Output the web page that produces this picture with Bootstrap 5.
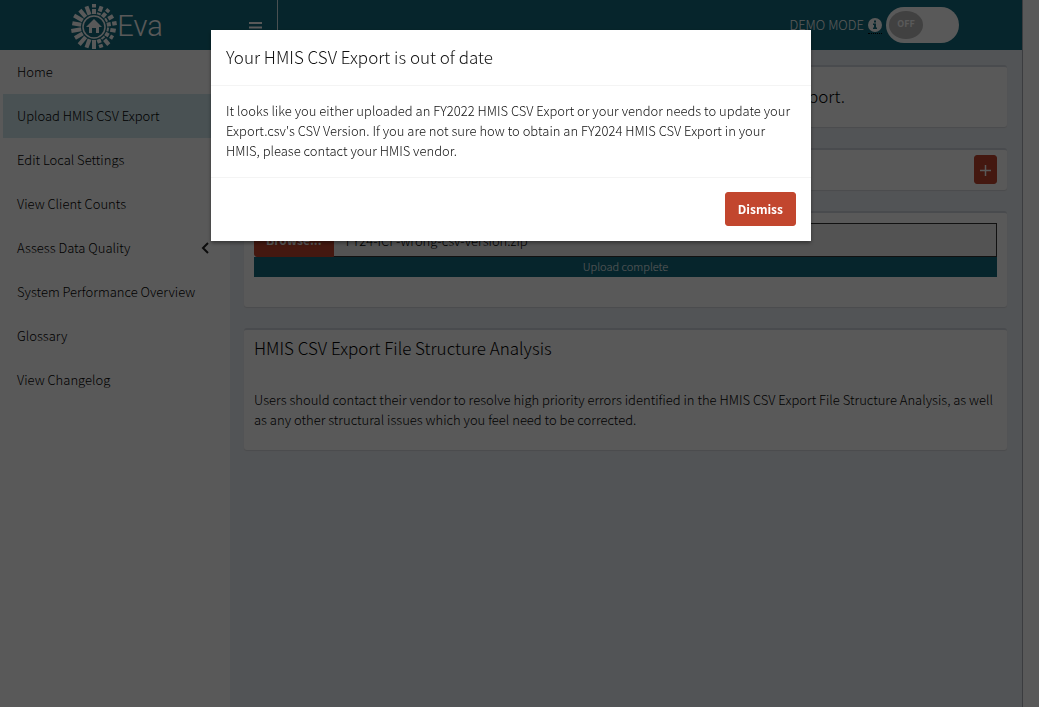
<!DOCTYPE html>
<html lang="en">
<head>
<meta charset="utf-8">
<meta name="viewport" content="width=device-width, initial-scale=1">
<title>Eva</title>
<link href="https://cdn.jsdelivr.net/npm/bootstrap@5.3.0/dist/css/bootstrap.min.css" rel="stylesheet">
<style>
:root { --teal: #126b7e; --brick: #c2462e; }
body { font: 300 13px/20px "Noto Sans CJK SC", "Open Sans", sans-serif; color: #111; background: #fff; }
h1, h2 { font-size: 17px; line-height: 20px; font-weight: 300; }
.page { isolation: isolate; margin-right: 16px; border-right: 1px solid #a8adb5; background: #ecf0f5; }
.topbar { height: 50px; background: var(--teal); color: #fff; }
.brand { width: 230px; padding: 3px 0 0 4px; color: #fff; font: 300 29px/47px Roboto, sans-serif; }
.menu-toggle { width: 48px; border-right: 1px solid #d5e4e8 !important; }
.side { width: 230px; background: #fff; }
.side a { height: 44px; padding: 0 21px 0 14px; border-left: 3px solid #fff; color: #000; }
.side a.active { background: #d0e8ee; }
main { padding: 15px 15px 0 14px; }
.panel { border-top: 2px solid #d2d6de; border-radius: 3px; background: #fff; box-shadow: 0 1px 1px rgba(0,0,0,.1); margin-bottom: 21px; padding: 10px; color: #000; }
.panel p { margin-bottom: 10px; }
.panel-lead { margin: 9px 0 11px; }
.panel-upload { padding-bottom: 30px; }
.panel-analysis { padding-top: 8px; }
.btn-brick { --bs-btn-font-size: 12px; --bs-btn-line-height: 20px; --bs-btn-font-weight: 700; --bs-btn-color: #fff; --bs-btn-bg: var(--brick); --bs-btn-border-color: var(--brick); --bs-btn-hover-color: #fff; --bs-btn-hover-bg: #a83a25; --bs-btn-hover-border-color: #a83a25; --bs-btn-border-radius: 3px; --bs-btn-padding-y: 6px; --bs-btn-padding-x: 12px; }
.btn-browse { --bs-btn-padding-x: 11px; }
.btn-plus { width: 23px; height: 29px; margin: -7px 0 -5px; padding: 0; line-height: 1; }
.file-name { height: 34px; border: 1px solid #333; border-radius: 0; background: #eee; font-size: 13px; font-weight: inherit; color: #000; }
.done-bar { height: 20px; background: var(--teal); color: #fff; font-size: 11px; border-radius: 0; }
.done-bar .progress-bar { background: var(--teal); padding-bottom: 2px; }
.demo-area { padding-right: 63px; }
.demo-info { border-bottom: 1px dotted #000; line-height: 1; padding-bottom: 1px; }
.switch-track { width: 73px; height: 36px; padding: 4px 3px; border-radius: 18px; background: #fff; }
.switch-knob { width: 34px; height: 28px; padding-bottom: 2px; border-radius: 50%; background: #b9b9b9; color: #fff; font-size: 9px; font-weight: 700; }
.shade { background: rgba(0,0,0,.65); }
.modal { padding-right: 17px; }
.modal-dialog { --bs-modal-width: 600px; margin-top: 30px; }
.modal-content { border: 0; border-radius: 0; box-shadow: 0 2px 4px rgba(0,0,0,.4); color: #111; }
.modal-header, .modal-footer { border-color: #f4f4f4; border-radius: 0; }
.modal-header { padding: 17px 15px 18px; }
.modal-body { padding: 15px 15px 16px; }
.modal-footer { padding: 14px 15px 15px; }
.modal-footer > * { margin: 0; }
</style>
</head>
<body>
<div class="page d-flex flex-column min-vh-100">
  <header class="topbar d-flex align-items-stretch">
    <a href="#" class="brand d-flex align-items-center justify-content-center text-decoration-none">
      <svg width="46" height="46" viewBox="-23 -23 46 46" aria-hidden="true">
        <g stroke="#fff" fill="none">
          <circle r="11" stroke-width="1.500"/>
          <g stroke-width="4">
            <path d="M0 -13V-22" transform="rotate(180)"/>
            <path d="M0 -13V-22" transform="rotate(200)"/><path d="M0 -13V-23" transform="rotate(220)"/>
            <path d="M0 -13V-22" transform="rotate(240)"/><path d="M0 -13V-23" transform="rotate(260)"/>
            <path d="M0 -13V-22" transform="rotate(280)"/><path d="M0 -13V-23" transform="rotate(300)"/>
            <path d="M0 -13V-22" transform="rotate(320)"/><path d="M0 -13V-22" transform="rotate(340)"/>
            <path d="M0 -13V-18M0 -19.500V-23"/><path d="M0 -13V-15M0 -16.500V-22" transform="rotate(20)"/>
            <path d="M0 -13V-18M0 -19.500V-23" transform="rotate(40)"/><path d="M0 -13V-15M0 -16.500V-22" transform="rotate(60)"/>
            <path d="M0 -13V-17M0 -18.500V-23" transform="rotate(80)"/><path d="M0 -13V-15M0 -16.500V-22" transform="rotate(100)"/>
            <path d="M0 -13V-17M0 -18.500V-22" transform="rotate(120)"/><path d="M0 -13V-15M0 -16.500V-23" transform="rotate(140)"/>
            <path d="M0 -13V-17M0 -18.500V-22" transform="rotate(160)"/>
          </g>
        </g>
        <path fill="#fff" d="M0 -8L8 0H5V6H2V1H-2V6H-5V0H-8Z"/>
      </svg>
      <span>Eva</span>
    </a>
    <button type="button" class="menu-toggle btn border-0 rounded-0 p-0 ps-1" aria-label="Toggle sidebar">
      <svg width="14" height="12" viewBox="0 0 14 12" aria-hidden="true"><path stroke="#fff" stroke-width="2" d="M0 1H13M0 5.500H13M0 10H13"/></svg>
    </button>
    <div class="demo-area ms-auto d-flex align-items-center">
      <span>DEMO MODE</span>
      <span class="demo-info mx-1"><svg width="14" height="14" viewBox="0 0 14 14" aria-hidden="true"><circle cx="7" cy="7" r="7" fill="#fff"/><path fill="#126b7e" d="M6 2.500H8V4.500H6ZM5 5.500H8V9.500H9V11H5V9.500H6V7H5Z"/></svg></span>
      <input type="checkbox" class="visually-hidden" id="demo">
      <label for="demo" class="switch-track" aria-label="Demo mode"><span class="switch-knob d-flex align-items-center justify-content-center">OFF</span></label>
    </div>
  </header>
  <div class="d-flex flex-grow-1">
    <nav class="side nav flex-column flex-nowrap flex-shrink-0">
      <a href="#" class="nav-link d-flex align-items-center">Home</a>
      <a href="#" class="nav-link d-flex align-items-center active">Upload HMIS CSV Export</a>
      <a href="#" class="nav-link d-flex align-items-center">Edit Local Settings</a>
      <a href="#" class="nav-link d-flex align-items-center">View Client Counts</a>
      <a href="#" class="nav-link d-flex align-items-center justify-content-between">Assess Data Quality
        <svg width="8" height="12" viewBox="0 0 8 12" aria-hidden="true"><path fill="none" stroke="#222" stroke-width="2" d="M7 1L2 6L7 11"/></svg></a>
      <a href="#" class="nav-link d-flex align-items-center">System Performance Overview</a>
      <a href="#" class="nav-link d-flex align-items-center">Glossary</a>
      <a href="#" class="nav-link d-flex align-items-center">View Changelog</a>
    </nav>
    <main class="flex-grow-1">
      <section class="panel"><h1 class="panel-lead">To begin using Eva, upload the ZIP file of your organization's HMIS CSV Export.</h1></section>
      <section class="panel d-flex align-items-center"><h2 class="m-0">Instructions</h2>
        <button type="button" class="btn btn-brick btn-plus ms-auto" aria-label="Expand"><svg width="11" height="11" viewBox="0 0 11 11" aria-hidden="true"><path stroke="#fff" stroke-width="1.500" d="M5.500 0V11M0 5.500H11"/></svg></button>
      </section>
      <section class="panel panel-upload">
        <div class="input-group flex-nowrap">
          <button type="button" class="btn btn-brick btn-browse">Browse...</button>
          <input type="text" class="form-control file-name" readonly value="FY24-ICF-wrong-csv-version.zip" aria-label="Selected file">
        </div>
        <div class="progress done-bar"><div class="progress-bar w-100">Upload complete</div></div>
      </section>
      <section class="panel panel-analysis">
        <h2 class="mb-4 pb-2">HMIS CSV Export File Structure Analysis</h2>
        <p>Users should contact their vendor to resolve high priority errors identified in the HMIS CSV Export File Structure Analysis, as well as any other structural issues which you feel need to be corrected.</p>
      </section>
    </main>
  </div>
</div>
<div class="shade position-fixed top-0 start-0 w-100 h-100"></div>
<div class="modal d-block" tabindex="-1" role="dialog" aria-modal="true" aria-labelledby="notice">
  <div class="modal-dialog">
    <div class="modal-content">
      <div class="modal-header"><h1 class="m-0" id="notice">Your HMIS CSV Export is out of date</h1></div>
      <div class="modal-body">It looks like you either uploaded an FY2022 HMIS CSV Export or your vendor needs to update your Export.csv's CSV Version. If you are not sure how to obtain an FY2024 HMIS CSV Export in your HMIS, please contact your HMIS vendor.</div>
      <div class="modal-footer"><button type="button" class="btn btn-brick">Dismiss</button></div>
    </div>
  </div>
</div>
<script src="https://cdn.jsdelivr.net/npm/bootstrap@5.3.0/dist/js/bootstrap.bundle.min.js"></script>
</body>
</html>
